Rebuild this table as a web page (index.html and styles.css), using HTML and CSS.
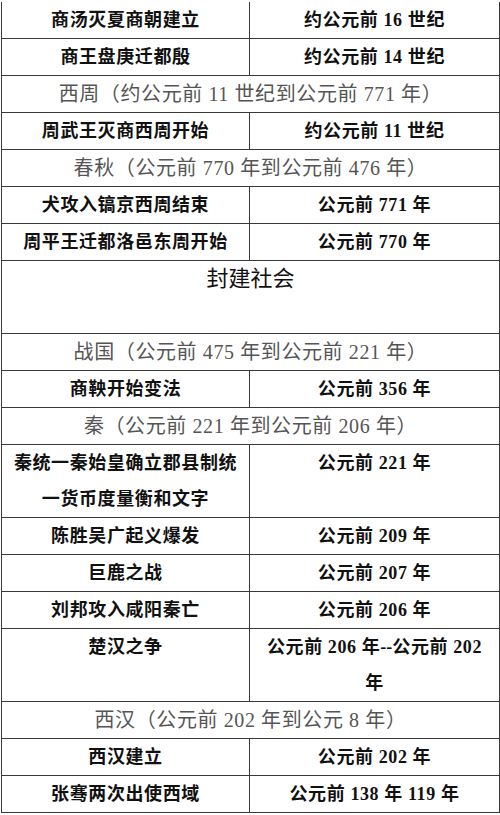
FILE: index.html
```html
<!DOCTYPE html>
<html lang="zh">
<head>
<meta charset="utf-8">
<link rel="stylesheet" href="styles.css">
</head>
<body>
<table class="history">
  <colgroup><col class="col-left"><col class="col-right"></colgroup>
  <tr class="first"><td class="ev">商汤灭夏商朝建立</td><td class="ev">约公元前 16 世纪</td></tr>
  <tr><td class="ev">商王盘庚迁都殷</td><td class="ev">约公元前 14 世纪</td></tr>
  <tr><td class="era" colspan="2">西周（约公元前 11 世纪到公元前 771 年）</td></tr>
  <tr><td class="ev">周武王灭商西周开始</td><td class="ev">约公元前 11 世纪</td></tr>
  <tr><td class="era" colspan="2">春秋（公元前 770 年到公元前 476 年）</td></tr>
  <tr><td class="ev">犬攻入镐京西周结束</td><td class="ev">公元前 771 年</td></tr>
  <tr><td class="ev">周平王迁都洛邑东周开始</td><td class="ev">公元前 770 年</td></tr>
  <tr><td class="title" colspan="2">封建社会<br>&nbsp;</td></tr>
  <tr><td class="era" colspan="2">战国（公元前 475 年到公元前 221 年）</td></tr>
  <tr><td class="ev">商鞅开始变法</td><td class="ev">公元前 356 年</td></tr>
  <tr><td class="era" colspan="2">秦（公元前 221 年到公元前 206 年）</td></tr>
  <tr><td class="ev">秦统一秦始皇确立郡县制统<br>一货币度量衡和文字</td><td class="ev">公元前 221 年</td></tr>
  <tr><td class="ev">陈胜吴广起义爆发</td><td class="ev">公元前 209 年</td></tr>
  <tr><td class="ev">巨鹿之战</td><td class="ev">公元前 207 年</td></tr>
  <tr><td class="ev">刘邦攻入咸阳秦亡</td><td class="ev">公元前 206 年</td></tr>
  <tr><td class="ev">楚汉之争</td><td class="ev">公元前 206 年<span class="dash">--</span>公元前 202<br>年</td></tr>
  <tr><td class="era" colspan="2">西汉（公元前 202 年到公元 8 年）</td></tr>
  <tr><td class="ev">西汉建立</td><td class="ev">公元前 202 年</td></tr>
  <tr><td class="ev">张骞两次出使西域</td><td class="ev">公元前 138 年 119 年</td></tr>
</table>
</body>
</html>
```
FILE: styles.css
```css
html, body {
  margin: 0;
  padding: 0;
  background: #ffffff;
}

.history {
  border-collapse: collapse;
  table-layout: fixed;
  width: 498px;
  margin-left: 1px;
  margin-top: 2px;
  font-family: "Liberation Serif", "Noto Sans CJK SC", serif;
  color: #111;
}

.col-left { width: 248px; }
.col-right { width: 250px; }

.history td {
  border: 1px solid #3a3a3a;
  padding: 0;
  text-align: center;
  vertical-align: top;
  line-height: 36px;
}

.history tr.first td {
  border-top: none;
}

.ev {
  font-size: 18px;
  font-weight: 700;
  letter-spacing: 0.6px;
}

.era {
  font-size: 20px;
  font-weight: 400;
  color: #555555;
  letter-spacing: 0.6px;
}

.title {
  font-size: 22px;
  font-weight: 400;
  color: #111;
}

.dash {
  letter-spacing: 0;
}
```
